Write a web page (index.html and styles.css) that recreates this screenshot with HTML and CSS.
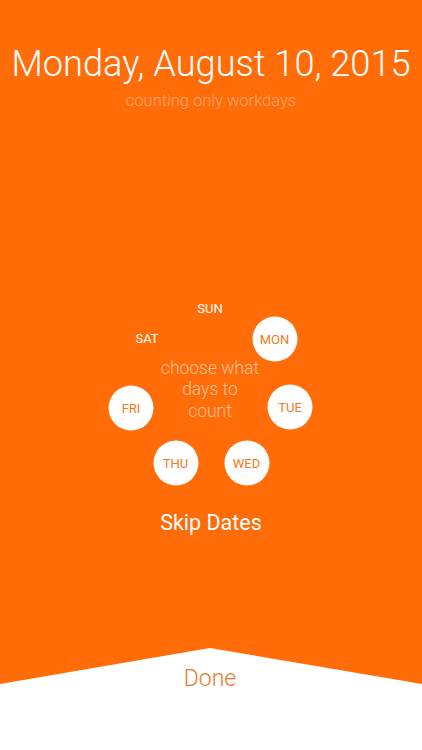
FILE: index.html
```html
<!DOCTYPE html>
<html>
<head>
<meta charset="utf-8">
<link rel="stylesheet" href="styles.css">
</head>
<body>
<div class="screen">
  <h1 class="title">Monday, August 10, 2015</h1>
  <p class="subtitle">counting only workdays</p>
  <div class="dial">
    <div class="center-text">choose what<br>days to<br>count</div>
    <span class="day off" style="left:120px;top:38px">SUN</span>
    <span class="day on" style="left:184.5px;top:68.5px">MON</span>
    <span class="day on" style="left:200px;top:137px">TUE</span>
    <span class="day on" style="left:156.5px;top:192.5px">WED</span>
    <span class="day on" style="left:85.5px;top:192.5px">THU</span>
    <span class="day on" style="left:41px;top:138px">FRI</span>
    <span class="day off" style="left:57px;top:68px">SAT</span>
  </div>
  <div class="skip">Skip Dates</div>
  <div class="footer"><span class="done">Done</span></div>
</div>
</body>
</html>
```
FILE: styles.css
```css
html, body {
  margin: 0;
  padding: 0;
}
body {
  background: #ff6c08;
  font-family: Roboto, "Liberation Sans", sans-serif;
}
.screen {
  width: 422px;
  height: 750px;
  display: flex;
  flex-direction: column;
  align-items: center;
  overflow: hidden;
}
.title {
  margin: 40px 0 0;
  font-weight: 300;
  font-size: 36.2px;
  line-height: 48px;
  color: #fff;
  white-space: nowrap;
}
.subtitle {
  margin: 3px 0 0;
  font-weight: 300;
  font-size: 16.5px;
  line-height: 20px;
  color: rgba(255, 255, 255, 0.42);
}
.dial {
  position: relative;
  width: 240px;
  height: 240px;
  margin-top: 159px;
  margin-right: 2px;
  display: flex;
  align-items: center;
  justify-content: center;
}
.center-text {
  text-align: center;
  font-weight: 300;
  font-size: 17.5px;
  line-height: 21.5px;
  color: rgba(255, 255, 255, 0.6);
}
.day {
  position: absolute;
  transform: translate(-50%, -50%);
  font-size: 13px;
  display: flex;
  align-items: center;
  justify-content: center;
  width: 45px;
  height: 45px;
  border-radius: 50%;
}
.day.off {
  color: #fff;
}
.day.on {
  background: #fff;
  color: #f47a22;
}
.skip {
  font-size: 21.5px;
  line-height: 26px;
  color: #fff;
}
.footer {
  margin-top: auto;
  width: 100%;
  height: 102px;
  background: #fff;
  clip-path: polygon(0 36px, 210px 0, 100% 36px, 100% 100%, 0 100%);
  display: flex;
  justify-content: center;
}
.done {
  margin-top: 17px;
  margin-right: 2px;
  font-weight: 300;
  font-size: 23px;
  line-height: 28px;
  color: #e97a2e;
}
```
